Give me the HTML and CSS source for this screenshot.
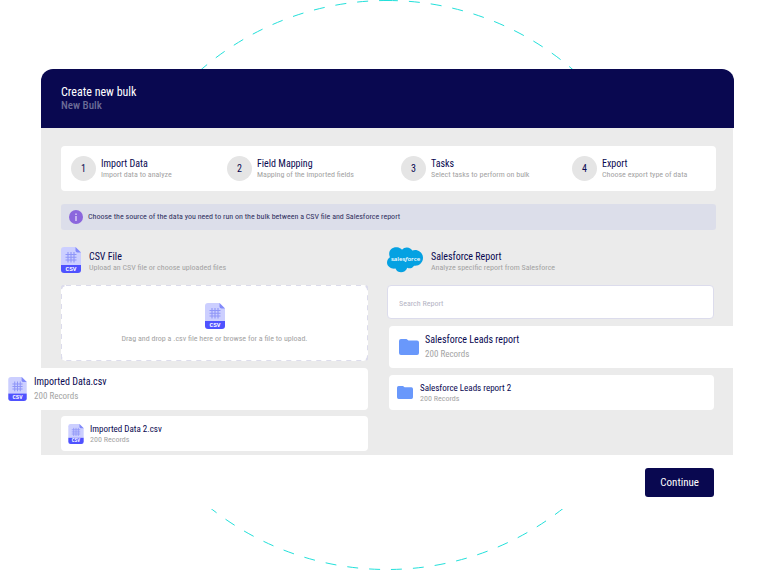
FILE: index.html
```html
<!DOCTYPE html>
<html lang="en">
<head>
<meta charset="utf-8">
<title>Create new bulk</title>
<link rel="stylesheet" href="styles.css">
</head>
<body>
<svg class="ring" viewBox="0 0 570 570" aria-hidden="true"><circle cx="285" cy="285" r="284.5" pathLength="1790" transform="rotate(-90 285 285)"/></svg>
<svg class="defs" aria-hidden="true">
  <symbol id="csv" viewBox="0 0 20 26">
    <path d="M3 0H14.5L20 5.5V18H0V3Q0 0 3 0Z" fill="#cccfff"/>
    <path d="M14.5 0L20 5.5H16.5Q14.5 5.500 14.5 3.5Z" fill="#8189fa"/>
    <path d="M0 18H20V23Q20 26 17 26H3Q0 26 0 23Z" fill="#4f52ff"/>
    <path d="M7 5V15.500M10 5V15.500M13 5V15.500M4.500 7.500H15.500M4.500 10.300H15.500M4.500 13H15.500" fill="none" stroke="#8f96f8" stroke-width="1.100"/>
    <text x="10" y="24" text-anchor="middle" class="csv-label">CSV</text>
  </symbol>
  <symbol id="folder" viewBox="0 0 20 16">
    <path d="M2 0H7.500L9.500 1.500H18Q20 1.500 20 3.500V14Q20 16 18 16H2Q0 16 0 14V2Q0 0 2 0Z" fill="#6998fb"/>
  </symbol>
</svg>
<main class="dialog">
  <header class="head">
    <h1>Create new bulk</h1>
    <p>New Bulk</p>
  </header>
  <div class="body">
    <ol class="steps">
      <li><span class="num">1</span><div><h2>Import Data</h2><p>Import data to analyze</p></div></li>
      <li><span class="num">2</span><div><h2>Field Mapping</h2><p>Mapping of the imported fields</p></div></li>
      <li><span class="num">3</span><div><h2>Tasks</h2><p>Select tasks to perform on bulk</p></div></li>
      <li><span class="num">4</span><div><h2>Export</h2><p>Choose export type of data</p></div></li>
    </ol>
    <div class="notice">
      <svg viewBox="0 0 14 14" aria-hidden="true"><circle cx="7" cy="7" r="7" fill="#8b66dd"/><path d="M7 6V11M7 3.500V5" stroke="#d9ccf6" stroke-width="1.500"/></svg>
      <p>Choose the source of the data you need to run on the bulk between a CSV file and Salesforce report</p>
    </div>
    <div class="sources">
      <section>
        <div class="title">
          <svg class="csv-icon" aria-hidden="true"><use href="#csv"/></svg>
          <div><h2>CSV File</h2><p>Upload an CSV file or choose uploaded files</p></div>
        </div>
        <button class="drop" type="button">
          <svg class="outline" aria-hidden="true"><rect/></svg>
          <svg class="csv-icon" aria-hidden="true"><use href="#csv"/></svg>
          <span>Drag and drop a .csv file here or browse for a file to upload.</span>
        </button>
        <div class="item large out-left">
          <svg class="csv-icon medium" aria-hidden="true"><use href="#csv"/></svg>
          <div><h3>Imported Data.csv</h3><p>200 Records</p></div>
        </div>
        <div class="item">
          <svg class="csv-icon small" aria-hidden="true"><use href="#csv"/></svg>
          <div><h3>Imported Data 2.csv</h3><p>200 Records</p></div>
        </div>
      </section>
      <section class="reports">
        <div class="title">
          <svg class="cloud" viewBox="0 0 36 26" aria-hidden="true">
            <path d="M15 2.800C16.500 1 18.200.300 20 .400C22.500.500 24.200 1.700 25.200 3.500C30 1.500 36 5 36 10.800C36 16 31.500 19.500 27 18.700C25.700 21 22.800 22 20.300 20.800C18.200 26.500 10.700 27 8.500 21.500C4.500 22.300 .500 19.500 .100 16.500C-.300 14 .900 11.500 2.900 10.200C.300 4 5-.300 10.200.300C12.200.600 14 1.500 15 2.800Z" fill="#05a1e2"/>
            <text x="18.500" y="14" text-anchor="middle" class="cloud-label">sales<tspan class="slant">f</tspan>orce</text>
          </svg>
          <div><h2>Salesforce Report</h2><p>Analyze specific report from Salesforce</p></div>
        </div>
        <input class="search" type="text" placeholder="Search Report" aria-label="Search Report">
        <div class="item large out-right">
          <svg class="folder" aria-hidden="true"><use href="#folder"/></svg>
          <div><h3>Salesforce Leads report</h3><p>200 Records</p></div>
        </div>
        <div class="item">
          <svg class="folder small" aria-hidden="true"><use href="#folder"/></svg>
          <div><h3>Salesforce Leads report 2</h3><p>200 Records</p></div>
        </div>
      </section>
    </div>
  </div>
  <footer class="foot"><button class="continue" type="button">Continue</button></footer>
</main>
</body>
</html>
```
FILE: styles.css
```css
* { box-sizing: border-box; }
body {
  position: relative;
  margin: 0;
  padding: 69px 45px 61px 41px;
  background: #fff;
  color: #090850;
  font: 10px/12px "Roboto Condensed", Roboto, sans-serif;
  overflow-x: hidden;
}
h1, h2, h3, p, ol { margin: 0; padding: 0; font-weight: 400; }
button, input { font-family: inherit; }
svg { display: block; flex: none; }
.defs { display: none; }
.ring { position: absolute; top: 0; left: calc(50% - 288px); width: 570px; height: 570px; }
.ring circle { fill: none; stroke: #22e0da; stroke-width: 1; stroke-dasharray: 11 11; }
.dialog { position: relative; border-radius: 12px; background: #fff; }
.head { padding: 16px 20px; border-radius: 12px 12px 0 0; background: #090850; color: #fff; }
.head h1 { font-size: 12px; line-height: 14px; }
.head p { font-size: 11px; line-height: 13px; font-weight: 500; color: #6b6b96; }
.body { margin-right: 1px; padding: 18px 17px 4px 20px; background: #ebebeb; }
.steps {
  display: grid;
  grid-template-columns: 156fr 174fr 171fr 144fr;
  padding: 10px 0 10px 10px;
  border-radius: 4px;
  background: #fff;
  list-style: none;
}
.steps li { display: flex; gap: 5px; align-items: center; }
.num { width: 25px; border-radius: 50%; background: #e5e5e5; line-height: 25px; text-align: center; }
h2, h3 { font-size: 10px; line-height: 12px; }
.steps p, .title p, .item p { font-size: 8px; line-height: 10px; color: #a3a3a3; }
.notice {
  display: flex;
  gap: 5px;
  align-items: center;
  margin: 13px 0 17px;
  padding: 6px 8px;
  border-radius: 3px;
  background: #dcdeea;
}
.notice svg { width: 14px; height: 14px; }
.notice p { font-size: 8px; line-height: 14px; color: #30305f; }
.sources { display: grid; grid-template-columns: 307fr 327fr; gap: 19px; padding-right: 2px; }
.title { display: flex; gap: 8px; align-items: center; height: 26px; margin-bottom: 12px; }
.title h2 { line-height: 14px; }
.title p { line-height: 8px; }
.title div { padding-top: 2px; }
.csv-icon { width: 20px; height: 26px; }
.csv-icon.medium { width: 19px; height: 24px; }
.csv-icon.small { width: 16px; height: 20px; }
.csv-label { font: 700 6px "Liberation Mono", monospace; fill: #fff; }
.drop {
  position: relative;
  display: flex;
  flex-direction: column;
  align-items: center;
  justify-content: center;
  gap: 4px;
  width: 100%;
  height: 76px;
  margin-bottom: 7px;
  padding: 2px 0 0;
  border: 0;
  border-radius: 5px;
  background: #fff;
  color: #a3a3a3;
  font-size: 8px;
  line-height: 12px;
}
.outline { position: absolute; inset: 0; width: 100%; height: 100%; }
.outline rect { x: 0; y: 0; width: 100%; height: 100%; rx: 5px; fill: none; stroke: #dcdcec; stroke-width: 2; stroke-dasharray: 5 5; }
.item { display: flex; gap: 6px; align-items: center; height: 35px; padding: 0 7px; border-radius: 4px; background: #fff; }
.item h3 { font-size: 9px; }
.item.large { height: 42px; margin-bottom: 6px; padding: 0 8px; }
.item.large h3 { font-size: 10px; line-height: 14px; }
.item.large p { font-size: 9px; line-height: 14px; }
.item.out-left { gap: 7px; margin-left: -61px; }
.reports .item { gap: 7px; margin-left: 2px; padding-left: 8px; }
.reports .out-right { gap: 6px; margin: 0 -19px 7px 2px; padding-left: 10px; border-radius: 4px 0 0 4px; }
.cloud { width: 36px; height: 26px; }
.cloud-label { font: 600 6px "Open Sans", sans-serif; fill: #fff; }
.slant { font-style: italic; }
.search {
  display: block;
  width: 100%;
  height: 34px;
  margin-bottom: 7px;
  padding: 2px 11px 0;
  border: 1px solid #dcdcec;
  border-radius: 4px;
  background: #fff;
  color: #090850;
  font-size: 8px;
}
.search::placeholder { color: #b5b5c5; opacity: 1; }
.folder { width: 20px; height: 16px; }
.folder.small { width: 16px; height: 13px; }
.foot { display: flex; justify-content: flex-end; padding: 13px 20px 12px; border-radius: 0 0 12px 12px; background: #fff; }
.continue { height: 29px; padding: 0 15px; border: 0; border-radius: 3px; background: #090850; color: #fff; font-size: 11px; }
```
